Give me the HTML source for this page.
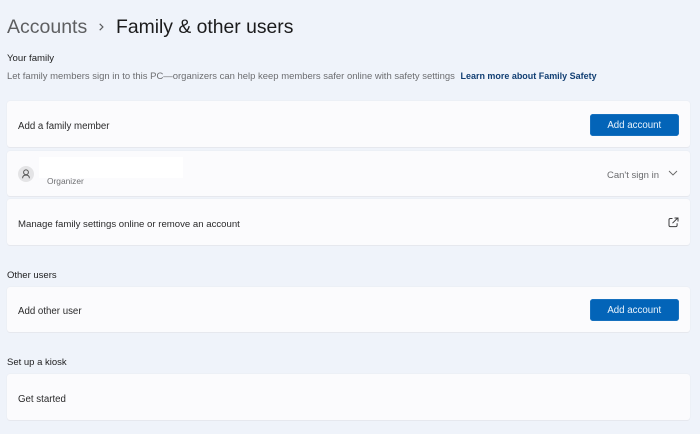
<!DOCTYPE html>
<html lang="en">
<head>
<meta charset="utf-8">
<title>Family &amp; other users</title>
<style>
html,body{margin:0;padding:0}
body{width:700px;height:434px;overflow:hidden;background:#eff3fa;font-family:"Liberation Sans",sans-serif;position:relative;color:#1c1c1c}
.t{position:absolute;white-space:nowrap;line-height:1;-webkit-font-smoothing:antialiased}
.card{position:absolute;left:6.5px;width:683px;background:#fbfbfd;border-radius:3px;box-shadow:0 1px 0 #e6e8ee,0 0 0 .5px #e9ecf3}
.btn{position:absolute;left:590px;width:88.5px;height:22px;background:#0364b8;border-radius:3px;color:#eaf4fd;font-size:9.7px;line-height:24px;text-align:center;box-shadow:inset 0 0 0 .5px #2a7cc4}
</style>
</head>
<body>
<div class="t" style="left:7px;top:18px;font-size:19.5px;color:#5e5f61">Accounts</div>
<svg style="position:absolute;left:97px;top:22px" width="9" height="10" viewBox="0 0 9 10"><path d="M2.700 1.800 5.900 5 2.700 8.200" fill="none" stroke="#5a5b5d" stroke-width="1.200"/></svg>
<div class="t" style="left:116px;top:18px;font-size:19.350px;color:#1b1b1c">Family &amp; other users</div>

<div class="t" style="left:7px;top:53.500px;font-size:9.600px;color:#1d1d1e">Your family</div>
<div class="t" style="left:7px;top:71.500px;font-size:9.480px;color:#6c6d70">Let family members sign in to this PC—organizers can help keep members safer online with safety settings</div>
<div class="t" style="left:460.500px;top:71.500px;font-size:8.970px;font-weight:bold;color:#123f73">Learn more about Family Safety</div>

<div class="card" style="top:101px;height:46px"></div>
<div class="t" style="left:18px;top:121.500px;font-size:9.700px;color:#2a2a2b">Add a family member</div>
<div class="btn" style="top:114px">Add account</div>

<div class="card" style="top:151px;height:45px"></div>
<div style="position:absolute;left:39px;top:157px;width:144px;height:21px;background:#fff"></div>
<div style="position:absolute;left:18px;top:165.500px;width:16px;height:16px;border-radius:50%;background:#e4e4e6"></div>
<svg style="position:absolute;left:18px;top:165.500px" width="16" height="16" viewBox="0 0 16 16"><circle cx="8" cy="6.300" r="2.400" fill="none" stroke="#555" stroke-width="1"/><path d="M4.600 12.200c0-2 1.400-3.100 3.400-3.100s3.400 1.100 3.400 3.100" fill="none" stroke="#555" stroke-width="1"/></svg>
<div class="t" style="left:47px;top:177px;font-size:8.400px;color:#6f7073">Organizer</div>
<div class="t" style="left:607px;top:170.500px;font-size:9.500px;color:#6a6b6e">Can't sign in</div>
<svg style="position:absolute;left:668px;top:169px" width="11" height="8" viewBox="0 0 11 8"><path d="M1 2 5 6 9 2" fill="none" stroke="#666" stroke-width=".9"/></svg>

<div class="card" style="top:199px;height:46px"></div>
<div class="t" style="left:18px;top:219.500px;font-size:9.600px;color:#2a2a2b">Manage family settings online or remove an account</div>
<svg style="position:absolute;left:668px;top:217px" width="11" height="11" viewBox="0 0 11 11"><path d="M4.500 1.500H2.300Q1 1.500 1 2.800V8.300Q1 9.600 2.300 9.600H7.800Q9.100 9.600 9.100 8.300V6.300" fill="none" stroke="#3c3c3e" stroke-width="1"/><path d="M4.500 6.200 9.700 1M6.500 1H10V4.500" fill="none" stroke="#3c3c3e" stroke-width="1"/></svg>

<div class="t" style="left:7px;top:270.500px;font-size:9.500px;color:#1d1d1e">Other users</div>
<div class="card" style="top:287px;height:45px"></div>
<div class="t" style="left:18px;top:306.500px;font-size:9.700px;color:#2a2a2b">Add other user</div>
<div class="btn" style="top:299px">Add account</div>

<div class="t" style="left:7px;top:358px;font-size:9.500px;color:#1d1d1e">Set up a kiosk</div>
<div class="card" style="top:374px;height:46px"></div>
<div class="t" style="left:18px;top:394.500px;font-size:9.700px;color:#2a2a2b">Get started</div>
</body>
</html>
